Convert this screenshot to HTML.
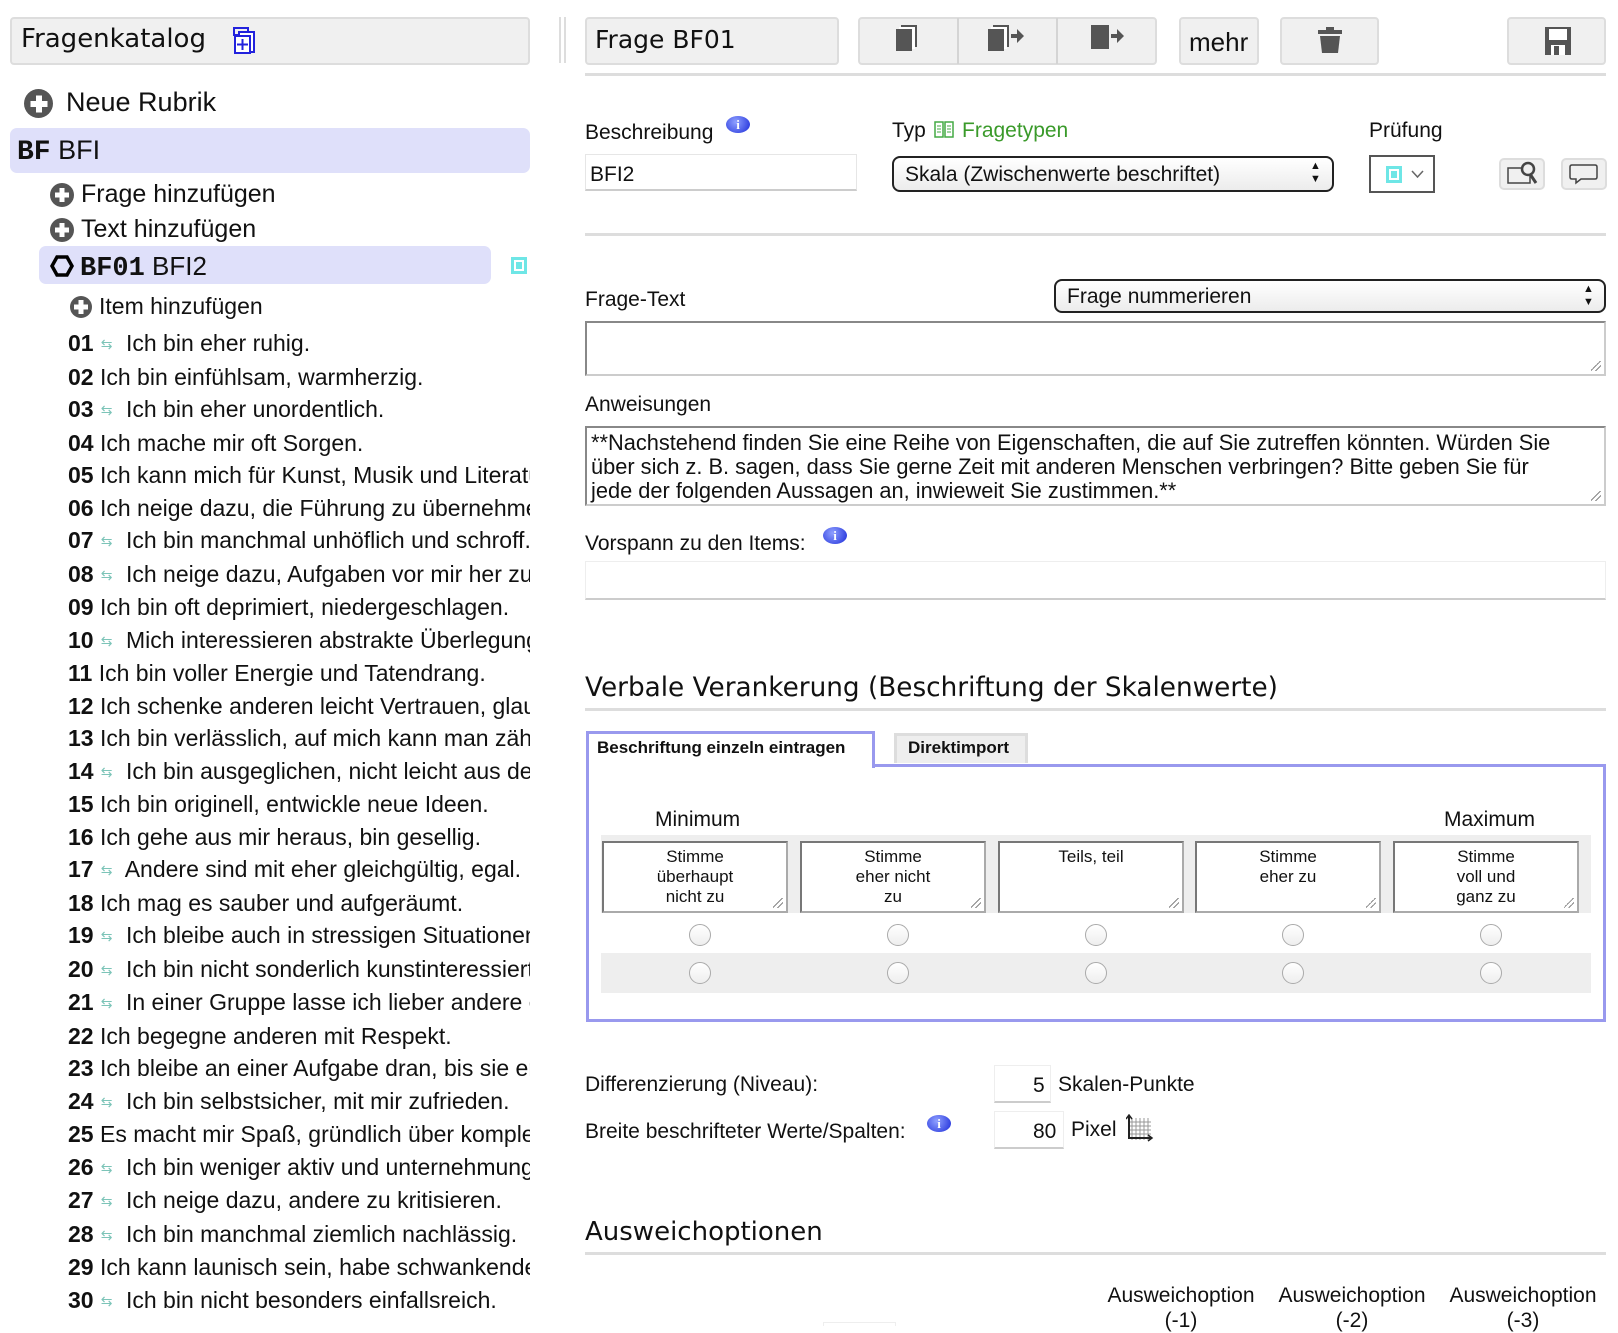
<!DOCTYPE html>
<html><head><meta charset="utf-8">
<style>
*{box-sizing:border-box;margin:0;padding:0}
body{width:1618px;height:1326px;background:#fff;font-family:"Liberation Sans",Arial,sans-serif;color:#111;position:relative;overflow:hidden}
.a{position:absolute}
.box{background:#f0f0f0;border:2px solid #ddd;border-radius:4px}
.hd{font-family:"DejaVu Sans",Verdana,sans-serif;white-space:nowrap}
.lbl{font-size:21px;white-space:nowrap;line-height:1}
.plus{display:inline-block;border-radius:50%;background:#555;position:relative;vertical-align:middle}
.plus:before,.plus:after{content:"";position:absolute;background:#fff;left:50%;top:50%;transform:translate(-50%,-50%)}
.p1:before{width:17px;height:6px}.p1:after{width:6px;height:17px}.p2:before{width:14px;height:5px}.p2:after{width:5px;height:14px}
.items{position:absolute;left:68px;top:327px;width:462px;overflow:hidden;font-size:23px;line-height:32.5px;white-space:nowrap}
.items b{font-weight:bold}
.rv{color:#7cc4b8;font-size:14px;display:inline-block;width:26px;text-align:center;vertical-align:2px}
.ta{border:2px solid #888;border-right-color:#ccc;border-bottom-color:#ccc;background:#fff}
.rad{position:absolute;width:22px;height:22px;border-radius:50%;border:1.5px solid #aaa;background:linear-gradient(#fff,#eee)}
.sbox{position:absolute;top:841px;width:186px;height:72px;background:#fff;border:2px solid #777;border-right-color:#aaa;border-bottom-color:#aaa;font-size:17px;text-align:center;line-height:20px;padding-top:4px}
.grip{position:absolute;right:3px;bottom:3px;width:10px;height:10px;background:linear-gradient(135deg,transparent 45%,#888 45%,#888 52%,transparent 52%,transparent 70%,#888 70%,#888 77%,transparent 77%)}
.info{display:inline-block;width:24px;height:17px;border-radius:50%;background:radial-gradient(circle at 40% 35%,#8fa0ff,#1a2ad8);color:#fff;font:bold 13px "Liberation Serif",serif;text-align:center;line-height:17px;vertical-align:top}
</style></head><body>

<div class="a box" style="left:10px;top:17px;width:520px;height:48px"></div>
<div class="a hd" style="left:21px;top:24px;font-size:26px">Fragenkatalog</div>
<svg class="a" style="left:233px;top:27px" width="25" height="27" viewBox="0 0 25 27"><rect x="1" y="1" width="14" height="7" fill="none" stroke="#22d" stroke-width="2"/><rect x="6" y="5" width="15" height="20" fill="#fff" stroke="#22d" stroke-width="2"/><rect x="2" y="9" width="15" height="17" fill="#fff" stroke="#22d" stroke-width="2"/><path d="M9.5 12v11M4 17.5h11" stroke="#22d" stroke-width="2"/></svg>

<div class="a" style="left:559px;top:17px;width:2px;height:46px;background:#ddd"></div>
<div class="a" style="left:564px;top:17px;width:2px;height:46px;background:#ddd"></div>

<div class="a" style="left:24px;top:89px"><span class="plus p1" style="width:29px;height:29px"></span></div>
<div class="a lbl" style="left:66px;top:89px;font-size:27px">Neue Rubrik</div>

<div class="a" style="left:10px;top:128px;width:520px;height:45px;background:#dfe0fa;border-radius:7px"></div>
<div class="a" style="left:17px;top:135px;font-size:27px;white-space:nowrap"><b style="font-family:'Liberation Mono',monospace;font-size:28px">BF</b> BFI</div>

<div class="a" style="left:50px;top:183px"><span class="plus p2" style="width:24px;height:24px"></span></div>
<div class="a lbl" style="left:81px;top:182px;font-size:25px">Frage hinzufügen</div>
<div class="a" style="left:50px;top:218px"><span class="plus p2" style="width:24px;height:24px"></span></div>
<div class="a lbl" style="left:81px;top:217px;font-size:25px">Text hinzufügen</div>

<div class="a" style="left:39px;top:246px;width:452px;height:38px;background:#dfe0fa;border-radius:7px"></div>
<svg class="a" style="left:50px;top:255px" width="24" height="22" viewBox="0 0 24 22"><path d="M7 2h10l5 9-5 9H7L2 11z" fill="none" stroke="#000" stroke-width="3.5"/></svg>
<div class="a" style="left:80px;top:251px;font-size:26px;white-space:nowrap"><b style="font-family:'Liberation Mono',monospace;font-size:27px">BF01</b> BFI2</div>
<div class="a" style="left:511px;top:257px;width:16px;height:17px;border:3px solid #6ee6e6;background:#fff"><div style="margin:2px;width:6px;height:7px;background:#6ee6e6"></div></div>

<div class="a" style="left:70px;top:296px"><span class="plus p2" style="width:22px;height:22px"></span></div>
<div class="a lbl" style="left:99px;top:295px;font-size:23px">Item hinzufügen</div>

<div class="items">
<div><b>01</b><span class="rv">⇆</span> Ich bin eher ruhig.</div>
<div><b>02</b> Ich bin einfühlsam, warmherzig.</div>
<div><b>03</b><span class="rv">⇆</span> Ich bin eher unordentlich.</div>
<div><b>04</b> Ich mache mir oft Sorgen.</div>
<div><b>05</b> Ich kann mich für Kunst, Musik und Literatur begeistern.</div>
<div><b>06</b> Ich neige dazu, die Führung zu übernehmen.</div>
<div><b>07</b><span class="rv">⇆</span> Ich bin manchmal unhöflich und schroff.</div>
<div><b>08</b><span class="rv">⇆</span> Ich neige dazu, Aufgaben vor mir her zu schieben.</div>
<div><b>09</b> Ich bin oft deprimiert, niedergeschlagen.</div>
<div><b>10</b><span class="rv">⇆</span> Mich interessieren abstrakte Überlegungen wenig.</div>
<div><b>11</b> Ich bin voller Energie und Tatendrang.</div>
<div><b>12</b> Ich schenke anderen leicht Vertrauen, glaube an das Gute.</div>
<div><b>13</b> Ich bin verlässlich, auf mich kann man zählen.</div>
<div><b>14</b><span class="rv">⇆</span> Ich bin ausgeglichen, nicht leicht aus der Ruhe zu bringen.</div>
<div><b>15</b> Ich bin originell, entwickle neue Ideen.</div>
<div><b>16</b> Ich gehe aus mir heraus, bin gesellig.</div>
<div><b>17</b><span class="rv">⇆</span> Andere sind mit eher gleichgültig, egal.</div>
<div><b>18</b> Ich mag es sauber und aufgeräumt.</div>
<div><b>19</b><span class="rv">⇆</span> Ich bleibe auch in stressigen Situationen gelassen.</div>
<div><b>20</b><span class="rv">⇆</span> Ich bin nicht sonderlich kunstinteressiert.</div>
<div><b>21</b><span class="rv">⇆</span> In einer Gruppe lasse ich lieber andere entscheiden.</div>
<div><b>22</b> Ich begegne anderen mit Respekt.</div>
<div><b>23</b> Ich bleibe an einer Aufgabe dran, bis sie erledigt ist.</div>
<div><b>24</b><span class="rv">⇆</span> Ich bin selbstsicher, mit mir zufrieden.</div>
<div><b>25</b> Es macht mir Spaß, gründlich über komplexe Dinge nachzudenken.</div>
<div><b>26</b><span class="rv">⇆</span> Ich bin weniger aktiv und unternehmungslustig.</div>
<div><b>27</b><span class="rv">⇆</span> Ich neige dazu, andere zu kritisieren.</div>
<div><b>28</b><span class="rv">⇆</span> Ich bin manchmal ziemlich nachlässig.</div>
<div><b>29</b> Ich kann launisch sein, habe schwankende Stimmungen.</div>
<div><b>30</b><span class="rv">⇆</span> Ich bin nicht besonders einfallsreich.</div>
</div>

<div class="a box" style="left:585px;top:17px;width:254px;height:48px"></div>
<div class="a hd" style="left:595px;top:25px;font-size:25px">Frage BF01</div>

<div class="a box" style="left:858px;top:17px;width:299px;height:48px"></div>
<div class="a" style="left:957px;top:18px;width:2px;height:46px;background:#d4d4d4"></div>
<div class="a" style="left:1056px;top:18px;width:2px;height:46px;background:#d4d4d4"></div>
<svg class="a" style="left:895px;top:24px" width="24" height="28"><rect x="6" y="1" width="16" height="22" fill="#555"/><rect x="4" y="3" width="16" height="22" fill="#fff"/><rect x="1" y="5" width="16" height="22" fill="#555"/></svg>
<svg class="a" style="left:987px;top:24px" width="38" height="28"><rect x="6" y="1" width="16" height="22" fill="#555"/><rect x="4" y="3" width="16" height="22" fill="#fff"/><rect x="1" y="5" width="16" height="22" fill="#555"/><path d="M24 10h6V5l7 7-7 7v-5h-6z" fill="#555"/></svg>
<svg class="a" style="left:1090px;top:24px" width="38" height="28"><rect x="1" y="1" width="18" height="24" fill="#555"/><path d="M21 10h6V5l7 7-7 7v-5h-6z" fill="#555"/></svg>

<div class="a box" style="left:1179px;top:17px;width:80px;height:48px"></div>
<div class="a" style="left:1189px;top:27px;font-size:26px">mehr</div>
<div class="a box" style="left:1280px;top:17px;width:99px;height:48px"></div>
<svg class="a" style="left:1317px;top:26px" width="26" height="28"><rect x="9" y="1" width="8" height="3" fill="#555"/><rect x="1" y="4" width="24" height="4" fill="#555"/><path d="M3 10h20l-2 17H5z" fill="#555"/></svg>
<div class="a box" style="left:1507px;top:17px;width:99px;height:48px"></div>
<svg class="a" style="left:1544px;top:26px" width="28" height="30"><path d="M1 1h26v28H1z" fill="#555"/><rect x="5" y="3" width="18" height="11" fill="#fff"/><rect x="7" y="19" width="14" height="10" fill="#fff"/><rect x="10" y="20" width="5" height="9" fill="#555"/></svg>

<div class="a" style="left:585px;top:73px;width:1021px;height:3px;background:#ddd"></div>

<div class="a lbl" style="left:585px;top:122px">Beschreibung</div>
<div class="a" style="left:726px;top:116px"><span class="info">i</span></div>
<div class="a" style="left:585px;top:154px;width:272px;height:37px;border:1px solid #e6e6e6;border-bottom:2px solid #ccc"></div>
<div class="a lbl" style="left:590px;top:164px">BFI2</div>

<div class="a lbl" style="left:892px;top:120px">Typ</div>
<svg class="a" style="left:934px;top:121px" width="20" height="17"><rect x="1" y="1" width="8" height="15" fill="none" stroke="#4a4" stroke-width="1.5"/><rect x="11" y="1" width="8" height="15" fill="none" stroke="#4a4" stroke-width="1.5"/><path d="M3 5h4M3 8h4M3 11h4M13 5h4M13 8h4M13 11h4" stroke="#4a4"/></svg>
<div class="a lbl" style="left:962px;top:120px;color:#3a9a2a">Fragetypen</div>
<div class="a" style="left:892px;top:156px;width:442px;height:36px;border:2px solid #222;border-radius:8px;background:linear-gradient(#fff,#ececec)"></div>
<div class="a lbl" style="left:905px;top:164px">Skala (Zwischenwerte beschriftet)</div>
<div class="a" style="left:1310px;top:160px;font-size:11px;line-height:13px">▲<br>▼</div>

<div class="a lbl" style="left:1369px;top:120px">Prüfung</div>
<div class="a" style="left:1369px;top:155px;width:66px;height:38px;border:2px solid #555"></div>
<div class="a" style="left:1386px;top:166px;width:16px;height:17px;border:3px solid #6ee6e6"><div style="margin:2px;width:6px;height:7px;background:#6ee6e6"></div></div>
<svg class="a" style="left:1411px;top:170px" width="13" height="9"><path d="M1 1l5.5 6L12 1" fill="none" stroke="#666" stroke-width="1.5"/></svg>

<div class="a box" style="left:1499px;top:158px;width:46px;height:32px;border-radius:5px"></div>
<svg class="a" style="left:1506px;top:160px" width="34" height="26"><rect x="2" y="8" width="22" height="15" fill="none" stroke="#444" stroke-width="1.5"/><circle cx="22" cy="9" r="6" fill="#eee" stroke="#444" stroke-width="2.5"/><path d="M24 14l6 9" stroke="#444" stroke-width="3"/></svg>
<div class="a box" style="left:1561px;top:158px;width:46px;height:32px;border-radius:5px"></div>
<svg class="a" style="left:1569px;top:163px" width="30" height="22"><path d="M3 2h23q2 0 2 2v10q0 2-2 2H12l-5 4v-4H3q-2 0-2-2V4q0-2 2-2z" fill="none" stroke="#444" stroke-width="1.5"/></svg>

<div class="a" style="left:585px;top:233px;width:1021px;height:3px;background:#ddd"></div>

<div class="a lbl" style="left:585px;top:289px">Frage-Text</div>
<div class="a" style="left:1054px;top:279px;width:552px;height:34px;border:2px solid #222;border-radius:8px;background:linear-gradient(#fff,#ececec)"></div>
<div class="a lbl" style="left:1067px;top:286px">Frage nummerieren</div>
<div class="a" style="left:1583px;top:283px;font-size:11px;line-height:13px">▲<br>▼</div>
<div class="a ta" style="left:585px;top:321px;width:1021px;height:55px"><div class="grip"></div></div>

<div class="a lbl" style="left:585px;top:394px">Anweisungen</div>
<div class="a ta" style="left:585px;top:426px;width:1021px;height:80px;padding:3px 30px 3px 4px;font-size:21.8px;line-height:24px;overflow:hidden">**Nachstehend finden Sie eine Reihe von Eigenschaften, die auf Sie zutreffen könnten. Würden Sie über sich z. B. sagen, dass Sie gerne Zeit mit anderen Menschen verbringen? Bitte geben Sie für jede der folgenden Aussagen an, inwieweit Sie zustimmen.**<div class="grip"></div></div>

<div class="a lbl" style="left:585px;top:533px">Vorspann zu den Items:</div>
<div class="a" style="left:823px;top:527px"><span class="info">i</span></div>
<div class="a" style="left:585px;top:561px;width:1021px;height:39px;border:1px solid #eee;border-bottom:2px solid #ccc"></div>

<div class="a hd" style="left:585px;top:673px;font-size:26.3px">Verbale Verankerung (Beschriftung der Skalenwerte)</div>
<div class="a" style="left:585px;top:708px;width:1021px;height:3px;background:#ddd"></div>

<div class="a" style="left:894px;top:733px;width:134px;height:30px;background:#eee;border:3px solid #ddd;border-bottom:none"></div>
<div class="a" style="left:908px;top:738px;font-size:17px;font-weight:bold">Direktimport</div>
<div class="a" style="left:586px;top:764px;width:1020px;height:258px;border:3px solid #9999ee"></div>
<div class="a" style="left:586px;top:731px;width:289px;height:37px;border:3px solid #9999ee;border-bottom:none;background:#fff"></div>
<div class="a" style="left:597px;top:738px;font-size:17px;font-weight:bold">Beschriftung einzeln eintragen</div>

<div class="a lbl" style="left:655px;top:809px">Minimum</div>
<div class="a lbl" style="left:1444px;top:809px">Maximum</div>
<div class="a" style="left:601px;top:835px;width:990px;height:78px;background:#eee"></div>
<div class="sbox" style="left:602px">Stimme<br>überhaupt<br>nicht zu<div class="grip"></div></div>
<div class="sbox" style="left:800px">Stimme<br>eher nicht<br>zu<div class="grip"></div></div>
<div class="sbox" style="left:998px">Teils, teil<div class="grip"></div></div>
<div class="sbox" style="left:1195px">Stimme<br>eher zu<div class="grip"></div></div>
<div class="sbox" style="left:1393px">Stimme<br>voll und<br>ganz zu<div class="grip"></div></div>
<div class="a" style="left:601px;top:953px;width:990px;height:40px;background:#eee"></div>
<div class="rad" style="left:689px;top:924px"></div><div class="rad" style="left:887px;top:924px"></div><div class="rad" style="left:1085px;top:924px"></div><div class="rad" style="left:1282px;top:924px"></div><div class="rad" style="left:1480px;top:924px"></div>
<div class="rad" style="left:689px;top:962px"></div><div class="rad" style="left:887px;top:962px"></div><div class="rad" style="left:1085px;top:962px"></div><div class="rad" style="left:1282px;top:962px"></div><div class="rad" style="left:1480px;top:962px"></div>

<div class="a lbl" style="left:585px;top:1074px">Differenzierung (Niveau):</div>
<div class="a" style="left:994px;top:1065px;width:57px;height:38px;border:1px solid #eee;border-bottom:2px solid #ccc"></div>
<div class="a lbl" style="left:1033px;top:1075px">5</div>
<div class="a lbl" style="left:1058px;top:1074px">Skalen-Punkte</div>
<div class="a lbl" style="left:585px;top:1121px">Breite beschrifteter Werte/Spalten:</div>
<div class="a" style="left:927px;top:1115px"><span class="info">i</span></div>
<div class="a" style="left:994px;top:1111px;width:70px;height:38px;border:1px solid #eee;border-bottom:2px solid #ccc"></div>
<div class="a lbl" style="left:1033px;top:1121px">80</div>
<div class="a lbl" style="left:1071px;top:1119px">Pixel</div>
<svg class="a" style="left:1126px;top:1114px" width="28" height="28"><path d="M6 4v22M10 4v22M14 4v22M18 4v22M22 4v22M3 8h22M3 12h22M3 16h22M3 20h22" stroke="#999" stroke-width="1"/><path d="M3 2v22h22" fill="none" stroke="#222" stroke-width="2"/><path d="M0 5l3-4 3 4M22 21l4 3-4 3" fill="none" stroke="#222" stroke-width="1.5"/></svg>

<div class="a hd" style="left:585px;top:1217px;font-size:26px">Ausweichoptionen</div>
<div class="a" style="left:585px;top:1252px;width:1021px;height:3px;background:#ddd"></div>
<div class="a" style="left:1101px;top:1283px;width:160px;text-align:center;font-size:21px;line-height:25px">Ausweichoption<br>(-1)</div>
<div class="a" style="left:1272px;top:1283px;width:160px;text-align:center;font-size:21px;line-height:25px">Ausweichoption<br>(-2)</div>
<div class="a" style="left:1443px;top:1283px;width:160px;text-align:center;font-size:21px;line-height:25px">Ausweichoption<br>(-3)</div>
<div class="a" style="left:823px;top:1322px;width:73px;height:4px;border:1px solid #eee;border-bottom:none"></div>
</body></html>
